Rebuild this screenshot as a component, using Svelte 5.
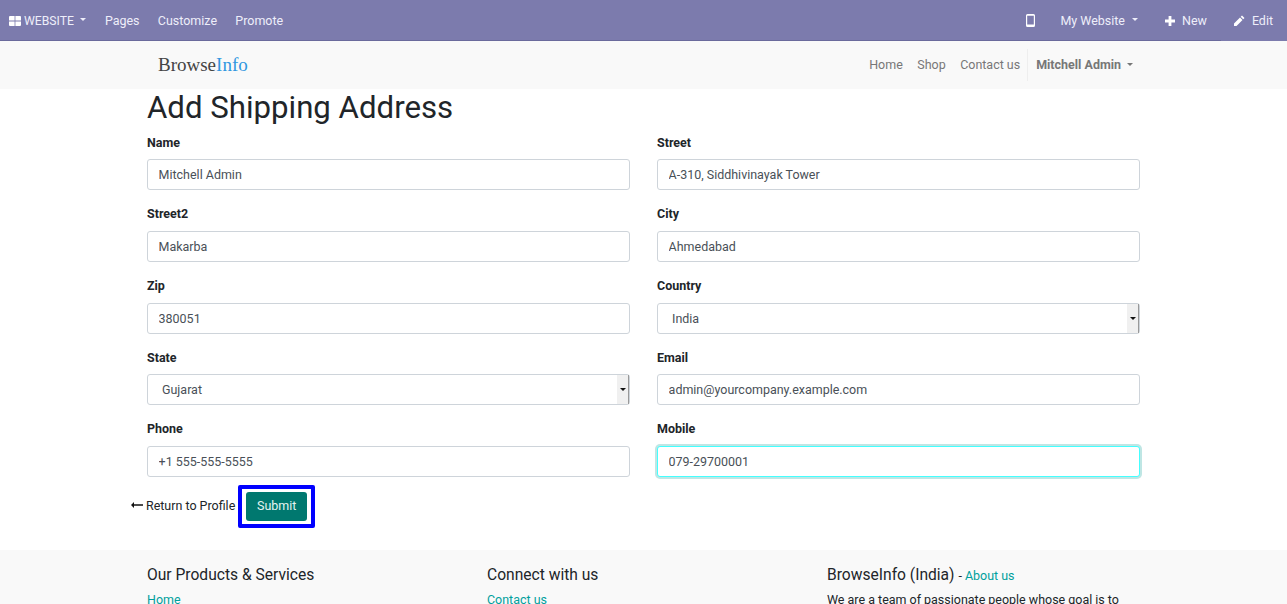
<script>
  let leftNav = ["Pages", "Customize", "Promote"];
  let siteNav = ["Home", "Shop", "Contact us"];
  let fields = [
    { label: "Name", value: "Mitchell Admin" },
    { label: "Street", value: "A-310, Siddhivinayak Tower" },
    { label: "Street2", value: "Makarba" },
    { label: "City", value: "Ahmedabad" },
    { label: "Zip", value: "380051" },
    { label: "Country", value: "India", select: true },
    { label: "State", value: "Gujarat", select: true },
    { label: "Email", value: "admin@yourcompany.example.com" },
    { label: "Phone", value: "+1 555-555-5555" },
    { label: "Mobile", value: "079-29700001", focus: true }
  ];
</script>

<style>
  :global(body) {
    font-family: Roboto, sans-serif;
    font-size: 12.48px;
    color: #212529;
    background: #fff;
  }
  .page {
    height: 604px;
    overflow: hidden;
  }
  a {
    text-decoration: none;
  }
  .caret {
    display: inline-block;
    width: 0;
    height: 0;
    border-top: 3px solid currentColor;
    border-left: 3px solid transparent;
    border-right: 3px solid transparent;
    vertical-align: middle;
    margin-left: 7px;
    margin-top: -2px;
  }
  .topbar {
    height: 40px;
    background: #7c7bad;
    border-bottom: 1px solid #6a6a9c;
    display: flex;
    justify-content: space-between;
  }
  .topbar a {
    color: #eeeefa;
    box-sizing: border-box;
    height: 40px;
    padding-top: 1px;
    display: flex;
    align-items: center;
  }
  .group {
    display: flex;
  }
  .topbar a.brand {
    gap: 3px;
    margin-left: 9px;
    margin-right: 19px;
    font-size: 12.2px;
  }
  .brand .caret {
    margin-left: 3px;
  }
  .group.left a.item {
    margin-right: 18.3px;
  }
  .topbar a.phone {
    margin-right: 25px;
    padding-top: 0;
  }
  .site {
    margin-right: 27px;
  }
  .new {
    margin-right: 14px;
    gap: 7px;
  }
  .topbar a.edit {
    height: 41px;
    margin-bottom: -1px;
    padding: 1px 14px 1px 12px;
    background: #7c7bad;
    gap: 7px;
  }
  .sitebar {
    height: 48px;
    background: #f9f9f9;
    display: flex;
    align-items: center;
    justify-content: space-between;
    padding: 0 147px 0 158px;
  }
  .logo {
    font-family: "Liberation Serif", serif;
    font-size: 19px;
    color: #444;
    margin-top: -1px;
  }
  .logo span {
    color: #2f97e0;
  }
  .sitenav {
    display: flex;
    align-items: center;
    line-height: 32px;
    color: #777;
  }
  .sitenav a {
    color: #777;
    margin-right: 14.5px;
  }
  .sitenav a:nth-child(3) {
    margin-right: 7px;
  }
  .user {
    border-left: 1px solid #eee;
    height: 32px;
    padding-left: 8px;
    padding-right: 7px;
    font-weight: 700;
    color: #777;
  }
  .user .caret {
    margin-left: 6px;
  }
  main {
    padding: 0 147px;
    height: 461px;
  }
  h1 {
    font-size: 31.2px;
    font-weight: 400;
    line-height: 37px;
    margin: 0;
    color: #212529;
  }
  .form {
    display: grid;
    grid-template-columns: 483px 483px;
    column-gap: 27px;
    row-gap: 14px;
    margin-top: 6.8px;
  }
  .field label {
    display: block;
    font-weight: 700;
    line-height: 20px;
    margin-bottom: 6.6px;
  }
  .field input {
    display: block;
    box-sizing: border-box;
    width: 100%;
    height: 31px;
    padding: 0 10.6px;
    border: 1px solid #ced4da;
    border-radius: 3px;
    font: inherit;
    color: #495057;
    background: #fff;
    outline: none;
  }
  .field input.focus {
    border-color: #4ff;
    box-shadow: 0 0 0 2px #bfe6e4;
  }
  .select {
    box-sizing: border-box;
    position: relative;
    height: 31px;
    padding-left: 14px;
    line-height: 29px;
    border: 1px solid #ced4da;
    border-radius: 3px;
    color: #495057;
  }
  .arrow {
    position: absolute;
    right: 0;
    top: 0;
    bottom: 0;
    width: 11px;
    background: #f0f0f0;
    border-right: 1px solid #999;
    display: flex;
    align-items: center;
    justify-content: center;
  }
  .arrow i {
    width: 0;
    height: 0;
    border-top: 3px solid #111;
    border-left: 3px solid transparent;
    border-right: 3px solid transparent;
  }
  .actions {
    display: flex;
    align-items: center;
    margin-top: 8.2px;
    margin-left: -16px;
  }
  .back {
    color: #212529;
    margin-right: 3px;
    margin-top: -2px;
    display: flex;
    align-items: center;
    gap: 3px;
  }
  .submit {
    border: 4px solid #0000ff;
    border-radius: 2px;
    padding: 3px 4px;
    display: flex;
  }
  .submit button {
    height: 29px;
    width: 61px;
    border: 0;
    border-radius: 3px;
    background: #00786f;
    color: #e6f4f2;
    font: inherit;
    padding: 0 0 2px;
  }
  footer {
    background: #f9f9f9;
    height: 54px;
    padding: 15px 147px 0;
    display: grid;
    grid-template-columns: 340px 340px 313px;
  }
  h5 {
    margin: 0 0 7px;
    font-size: 15.6px;
    font-weight: 400;
    line-height: 20px;
    color: #212529;
  }
  h5 small {
    font-size: 12.48px;
  }
  footer a {
    color: #00a09d;
  }
  footer p {
    margin: -2px 0 0;
    line-height: 18px;
  }
</style>

<div class="page">
  <div class="topbar">
    <div class="group left">
      <a class="brand" href="#top">
        <svg width="12" height="10" viewBox="0 0 12 10"><path fill="#fff" d="M0 1a1 1 0 0 1 1-1h4.600v4.600H0zM6.400 0H11a1 1 0 0 1 1 1v3.600H6.400zM0 5.400h5.600V10H1a1 1 0 0 1-1-1zM6.400 5.400H12V9a1 1 0 0 1-1 1H6.400z" /></svg>
        WEBSITE<span class="caret"></span>
      </a>
      {#each leftNav as item}
        <a class="item" href="#top">{item}</a>
      {/each}
    </div>
    <div class="group right">
      <a class="phone" href="#top" aria-label="Mobile preview">
        <svg width="9" height="13" viewBox="0 0 9 13"><path fill="#fff" fill-rule="evenodd" d="M1.500 0h6A1.500 1.500 0 0 1 9 1.500v10A1.500 1.500 0 0 1 7.500 13h-6A1.500 1.500 0 0 1 0 11.500v-10A1.500 1.500 0 0 1 1.500 0zM1.200 1.800v8.800h6.600V1.800z" /></svg>
      </a>
      <a class="site" href="#top">My Website<span class="caret"></span></a>
      <a class="new" href="#top">
        <svg width="10" height="10" viewBox="0 0 10 10"><path fill="#fff" d="M3.600 0h2.800v3.600H10v2.800H6.400V10H3.600V6.400H0V3.600h3.600z" /></svg>
        New
      </a>
      <a class="edit" href="#top">
        <svg width="12" height="12" viewBox="0 0 12 12"><path fill="#fff" d="M9 0.500l2.500 2.500-1.300 1.300-2.500-2.500zM7 2.500l2.500 2.500L3.500 11H1V8.500z" /></svg>
        Edit
      </a>
    </div>
  </div>

  <div class="sitebar">
    <div class="logo">Browse<span>Info</span></div>
    <nav class="sitenav">
      {#each siteNav as item}
        <a href="#top">{item}</a>
      {/each}
      <div class="user">Mitchell Admin<span class="caret"></span></div>
    </nav>
  </div>

  <main>
    <h1>Add Shipping Address</h1>
    <div class="form">
      {#each fields as field}
        <div class="field">
          <label for={field.label}>{field.label}</label>
          {#if field.select}
            <div class="select" id={field.label}>
              {field.value}
              <span class="arrow"><i></i></span>
            </div>
          {:else}
            <input id={field.label} class:focus={field.focus} value={field.value} />
          {/if}
        </div>
      {/each}
    </div>
    <div class="actions">
      <a class="back" href="#top">
        <svg width="12" height="6" viewBox="0 0 12 6"><path fill="#111" d="M3 0v2.300h9v1.400H3V6L0 3z" /></svg>
        Return to Profile
      </a>
      <div class="submit"><button>Submit</button></div>
    </div>
  </main>

  <footer>
    <div>
      <h5>Our Products &amp; Services</h5>
      <a href="#top">Home</a>
    </div>
    <div>
      <h5>Connect with us</h5>
      <a href="#top">Contact us</a>
    </div>
    <div>
      <h5>BrowseInfo (India) <small>- <a href="#top">About us</a></small></h5>
      <p>We are a team of passionate people whose goal is to</p>
    </div>
  </footer>
</div>
